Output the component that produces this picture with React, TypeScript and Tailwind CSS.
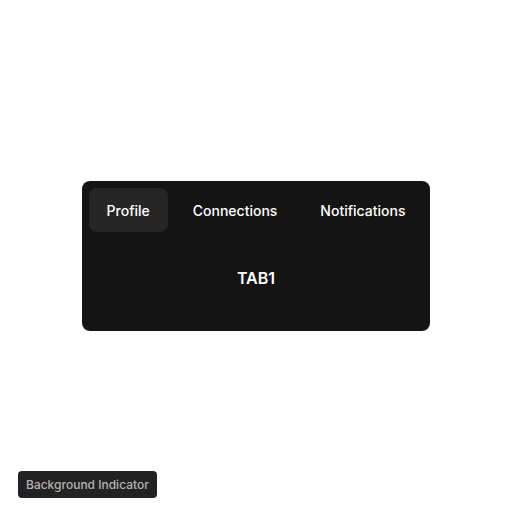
import { useState } from "react";

const TABS = ["Profile", "Connections", "Notifications"];

export default function App() {
  const [active, setActive] = useState(0);

  return (
    <div
      className="relative flex h-[512px] w-[512px] items-center justify-center bg-white"
      style={{ fontFamily: "Inter, 'Noto Sans', sans-serif" }}
    >
      {/* Tabs card */}
      <div className="flex flex-col rounded-[8px] bg-[#141414] p-[7px]">
        <div className="flex gap-[7px]">
          {TABS.map((tab, i) => (
            <button
              key={tab}
              onClick={() => setActive(i)}
              className={
                i === active
                  ? "h-[44px] rounded-[8px] bg-[#262626] px-[18px] text-[14px] font-medium text-white"
                  : "h-[44px] rounded-[8px] px-[18px] text-[14px] font-medium text-white"
              }
            >
              {tab}
            </button>
          ))}
        </div>
        <div className="flex h-[92px] items-center justify-center text-[16px] font-semibold text-white">
          TAB{active + 1}
        </div>
      </div>

      {/* Indicator */}
      <div className="absolute bottom-[14px] left-[18px] flex h-[27px] items-center rounded-[4px] bg-[#222222] px-[8px] text-[12px] font-medium text-[#b3b3b3]">
        Background Indicator
      </div>
    </div>
  );
}
